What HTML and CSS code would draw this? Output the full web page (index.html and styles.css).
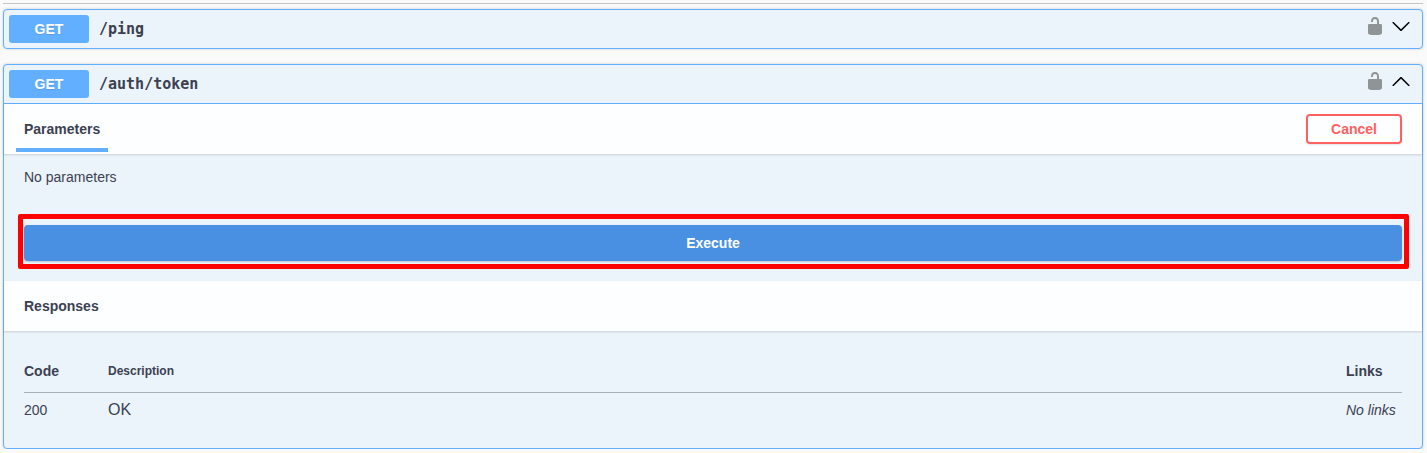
FILE: index.html
```
<!DOCTYPE html>
<html lang="en">
<head>
<meta charset="utf-8">
<title>API documentation</title>
<link rel="stylesheet" href="styles.css">
</head>
<body>
<svg class="sprite" aria-hidden="true">
  <symbol id="unlocked" viewBox="0 0 20 20">
    <path d="M15.8 8H14V5.6C14 2.703 12.665 1 10 1 7.334 1 6 2.703 6 5.6V6h2v-.801C8 3.754 8.797 3 10 3c1.203 0 2 .754 2 2.199V8H4c-.553 0-1 .646-1 1.199V17c0 .549.428 1.139.951 1.307l1.197.387C5.672 18.861 6.55 19 7.1 19h5.8c.549 0 1.428-.139 1.951-.307l1.196-.387c.524-.167.953-.757.953-1.306V9.199C17 8.646 16.352 8 15.8 8z"/>
  </symbol>
  <symbol id="arrow-down" viewBox="0 0 20 20">
    <path d="M17.418 6.109c.272-.268.709-.268.979 0s.271.701 0 .969l-7.908 7.83c-.27.268-.707.268-.979 0l-7.908-7.83c-.27-.268-.27-.701 0-.969.271-.268.709-.268.979 0L10 13.25l7.418-7.141z"/>
  </symbol>
  <symbol id="arrow-up" viewBox="0 0 20 20">
    <path d="M17.418 14.908c.272.268.709.268.979 0s.271-.701 0-.969l-7.908-7.83c-.27-.268-.707-.268-.979 0l-7.908 7.83c-.27.268-.27.701 0 .969.271.268.709.268.979 0L10 7.767l7.418 7.141z"/>
  </symbol>
</svg>
<main class="operations">
  <section class="opblock">
    <div class="summary">
      <span class="method">GET</span>
      <span class="path">/ping</span>
      <button class="icon-button lock" type="button" aria-label="Authorize"><svg><use href="#unlocked"/></svg></button>
      <button class="icon-button arrow" type="button" aria-label="Expand operation"><svg><use href="#arrow-down"/></svg></button>
    </div>
  </section>
  <section class="opblock open">
    <div class="summary">
      <span class="method">GET</span>
      <span class="path">/auth/token</span>
      <button class="icon-button lock" type="button" aria-label="Authorize"><svg><use href="#unlocked"/></svg></button>
      <button class="icon-button arrow" type="button" aria-label="Collapse operation"><svg><use href="#arrow-up"/></svg></button>
    </div>
    <div class="section-header">
      <h4 class="tab">Parameters</h4>
      <button class="cancel" type="button">Cancel</button>
    </div>
    <p class="empty">No parameters</p>
    <div class="execute-row">
      <button class="execute" type="button">Execute</button>
    </div>
    <div class="section-header">
      <h4 class="title">Responses</h4>
    </div>
    <div class="responses">
      <table>
        <thead>
          <tr><th class="code">Code</th><th class="description">Description</th><th class="links">Links</th></tr>
        </thead>
        <tbody>
          <tr><td class="code">200</td><td class="description">OK</td><td class="links"><i>No links</i></td></tr>
        </tbody>
      </table>
    </div>
  </section>
</main>
</body>
</html>
```
FILE: styles.css
```
* {
  box-sizing: border-box;
}

body {
  margin: 0;
  background: #fafafa;
  color: #3b4151;
  font: 14px/16px "Liberation Sans", Arial, sans-serif;
}

button {
  font: inherit;
  cursor: pointer;
}

h4,
p {
  margin: 0;
}

.sprite {
  display: none;
}

.operations {
  margin: 3px 4px 0 3px;
  padding-top: 5px;
  border-top: 1px solid #c4c5c8;
}

.opblock {
  margin-bottom: 15px;
  border: 1px solid #61affe;
  border-radius: 4px;
  background: #ebf3fb;
  box-shadow: 0 0 3px rgba(0, 0, 0, 0.19);
}

.opblock.open {
  margin-bottom: 0;
}

.summary {
  display: flex;
  align-items: center;
  padding: 5px;
}

.open .summary {
  border-bottom: 1px solid #61affe;
}

.method {
  width: 80px;
  padding: 6px 0;
  border-radius: 3px;
  background: #61affe;
  color: #fff;
  font-weight: 700;
  text-align: center;
  text-shadow: 0 1px 0 rgba(0, 0, 0, 0.1);
}

.path {
  flex: 1;
  padding: 0 10px;
  font-family: "DejaVu Sans Mono", monospace;
  font-size: 15px;
  font-weight: 700;
}

.icon-button {
  display: flex;
  padding: 0;
  border: 0;
  background: none;
}

.icon-button svg {
  width: 20px;
  height: 20px;
}

.lock {
  margin: 0 6px 6px 0;
  fill: #8f9496;
}

.arrow {
  margin: 0 6px 6px 0;
  fill: #000;
}

.section-header {
  display: flex;
  align-items: center;
  justify-content: space-between;
  height: 50px;
  padding: 0 20px 0 12px;
  background: rgba(255, 255, 255, 0.88);
  box-shadow: 0 1px 2px rgba(0, 0, 0, 0.15);
}

.tab {
  align-self: flex-end;
  margin-bottom: 2px;
  padding: 0 8px 11px;
  border-bottom: 4px solid #61affe;
}

.title {
  padding: 0 8px;
}

.cancel {
  width: 96px;
  height: 30px;
  padding: 0;
  border: 2px solid #ff6060;
  border-radius: 4px;
  background: transparent;
  box-shadow: 0 1px 2px rgba(0, 0, 0, 0.1);
  color: #ff6060;
  font-weight: 700;
}

.empty {
  padding: 15px 20px 0;
}

.execute-row {
  padding: 40px 20px 20px;
}

.execute {
  position: relative;
  display: block;
  width: 100%;
  height: 36px;
  border: 0;
  border-radius: 4px;
  background: #4990e2;
  box-shadow: 0 1px 2px rgba(0, 0, 0, 0.2);
  color: #fff;
  font-weight: 700;
}

/* Highlight frame around the execute button */
.execute::after {
  content: "";
  position: absolute;
  inset: -11px -7px -8px -6px;
  border: 5px solid #f00;
  border-radius: 2px;
}

.responses {
  padding: 20px;
}

table {
  width: 100%;
  border-collapse: collapse;
}

th,
td {
  padding: 0;
  text-align: left;
}

th {
  height: 41px;
  border-bottom: 1px solid #a9b0bb;
}

td {
  height: 36px;
}

.code {
  width: 84px;
}

th.description {
  font-size: 12px;
}

td.description {
  font-size: 16px;
}

.links {
  width: 56px;
}
```
